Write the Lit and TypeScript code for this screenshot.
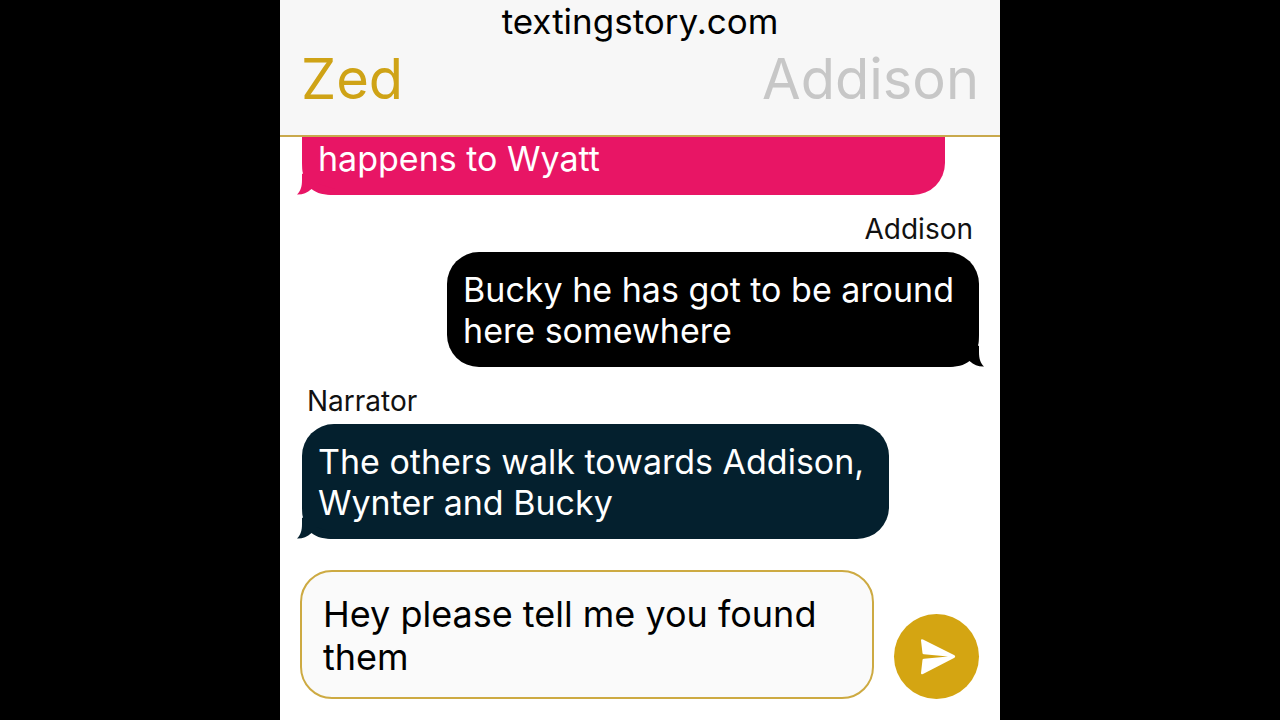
import { LitElement, html, css } from "lit";
import { customElement, property, state } from "lit/decorators.js";
import { classMap } from "lit/directives/class-map.js";

interface Message {
  author?: string;
  lines: string[];
  tone: "pink" | "black" | "navy";
  outgoing?: boolean;
  continued?: boolean;
}

@customElement("chat-bubble")
class ChatBubble extends LitElement {
  @property({ attribute: false }) message!: Message;

  static styles = css`
    :host {
      display: block;
    }
    .row {
      display: flex;
      flex-direction: column;
      align-items: flex-start;
    }
    .row.outgoing {
      align-items: flex-end;
    }
    .author {
      padding: 0 5px;
      margin-bottom: 6px;
      font-size: 28px;
      line-height: 34px;
      color: #111;
    }
    .outgoing .author {
      padding: 0 6px;
    }
    .bubble {
      position: relative;
      box-sizing: border-box;
      margin: 0;
      padding: 17px 25px 16px 16px;
      border-radius: 32px;
      font-size: 34px;
      line-height: 41px;
      white-space: pre-line;
      color: #fff;
      background: var(--tone);
    }
    .continued .bubble {
      width: 95%;
      border-top-left-radius: 0;
      border-top-right-radius: 0;
    }
    .pink {
      --tone: #e81565;
    }
    .black {
      --tone: #000;
    }
    .navy {
      --tone: #04202e;
    }
    .tail {
      position: absolute;
      left: -5px;
      bottom: 0;
      width: 40px;
      height: 40px;
      fill: var(--tone);
    }
    .outgoing .tail {
      left: auto;
      right: -5px;
      transform: scaleX(-1);
    }
  `;

  render() {
    const { author, lines, tone, outgoing = false, continued = false } = this.message;
    return html`
      <div class=${classMap({ row: true, outgoing, continued, [tone]: true })}>
        ${author ? html`<div class="author">${author}</div>` : ""}
        <p class="bubble">${lines.join("\n")}<svg class="tail" viewBox="0 0 40 40" aria-hidden="true">
            <path d="M5 0 L5.4 16 L6 18.500 L5 19 L5 25 C5 32 3.500 36 0 39.600 C5.500 39.800 10 38.200 14.500 34 C20 38.500 27 40 38 40 L38 34 L19 28 L19 0 Z" />
          </svg></p>
      </div>
    `;
  }
}

@customElement("app-root")
class AppRoot extends LitElement {
  @state() private speaker = "Zed";

  private messages: Message[] = [
    { lines: ["happens to Wyatt"], tone: "pink", continued: true },
    { author: "Addison", lines: ["Bucky he has got to be around", "here somewhere"], tone: "black", outgoing: true },
    { author: "Narrator", lines: ["The others walk towards Addison,", "Wynter and Bucky"], tone: "navy" },
  ];

  static styles = css`
    :host {
      display: flex;
      justify-content: center;
      height: 100vh;
      background: #000;
      font-family: Inter, "Liberation Sans", sans-serif;
    }
    .phone {
      display: flex;
      flex-direction: column;
      height: 100%;
      width: 100vh;
      max-width: 100%;
      background: #fff;
    }
    .header {
      position: relative;
      z-index: 1;
      padding: 0 21px 20px;
      background: #f7f7f7;
      border-bottom: 2px solid #c9a94c;
    }
    .title {
      margin: 0;
      text-align: center;
      font-size: 35px;
      font-weight: 400;
      line-height: 43px;
      color: #000;
    }
    .speakers {
      display: flex;
      justify-content: space-between;
    }
    .speaker {
      padding: 0;
      border: 0;
      background: none;
      font: inherit;
      font-size: 56px;
      line-height: 72px;
      color: #c7c7c7;
      cursor: pointer;
    }
    .speaker.active {
      color: #cfa316;
    }
    .thread {
      flex: 1;
      min-height: 0;
      display: flex;
      flex-direction: column;
      justify-content: flex-end;
      gap: 17px;
      padding: 0 21px 31px 22px;
      overflow: hidden;
    }
    .composer {
      display: flex;
      align-items: flex-end;
      gap: 20px;
      padding: 0 21px 21px 20px;
    }
    .draft {
      flex: 1;
      min-width: 0;
      box-sizing: border-box;
      height: 129px;
      margin: 0;
      padding: 21px 20px 18px 21px;
      border: 2px solid #cdaa42;
      border-radius: 32px;
      outline: 0;
      resize: none;
      overflow: hidden;
      font: inherit;
      font-size: 36px;
      line-height: 43px;
      color: #000;
      background: #fafafa;
    }
    .send {
      display: block;
      width: 85px;
      height: 85px;
      padding: 0;
      border: 0;
      border-radius: 50%;
      background: #d4a512;
      cursor: pointer;
    }
    .send svg {
      display: block;
      width: 100%;
      height: 100%;
    }
  `;

  render() {
    return html`
      <main class="phone">
        <header class="header">
          <h1 class="title">textingstory.com</h1>
          <div class="speakers">
            ${["Zed", "Addison"].map(
              (name) => html`<button
                class=${classMap({ speaker: true, active: this.speaker === name })}
                @click=${() => (this.speaker = name)}
              >${name}</button>`
            )}
          </div>
        </header>
        <section class="thread">
          ${this.messages.map((m) => html`<chat-bubble .message=${m}></chat-bubble>`)}
        </section>
        <form class="composer" @submit=${(e: Event) => e.preventDefault()}>
          <textarea class="draft" aria-label="Message" spellcheck="false" .value=${"Hey please tell me you found them"}></textarea>
          <button class="send" aria-label="Send">
            <svg viewBox="0 0 85 85" aria-hidden="true">
              <path fill="#fff" d="M27 26.500 Q27 24.500 29 25.500 L60.500 41.300 Q62 42.500 60.500 43.700 L29 60 Q27 61 27 59 L28.500 45.800 Q28.700 45 30 44.800 L54 42.500 L30 40.200 Q28.700 40 28.500 39.200 Z" />
            </svg>
          </button>
        </form>
      </main>
    `;
  }
}
